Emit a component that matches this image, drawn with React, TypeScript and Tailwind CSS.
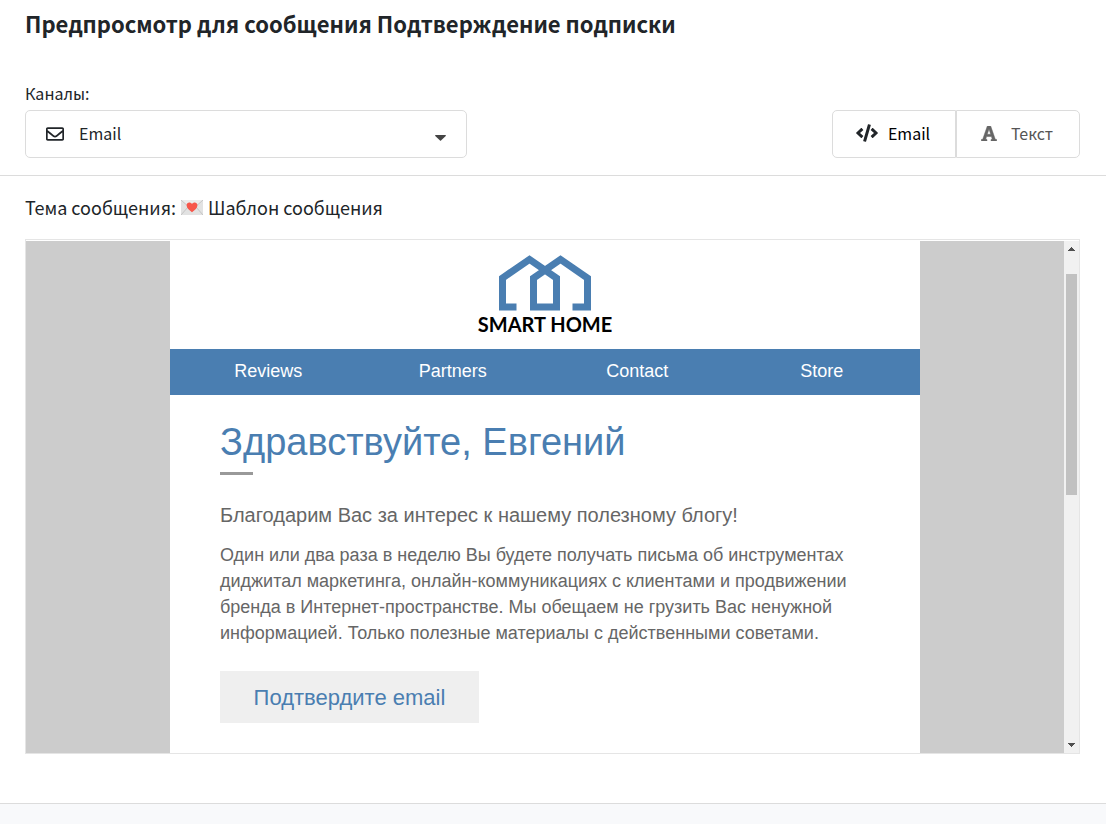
import { useState } from 'react';
import { FaCode, FaRegEnvelope } from 'react-icons/fa';

const MENU = ['Reviews', 'Partners', 'Contact', 'Store'];

function LoveLetter() {
  return (
    <svg viewBox="0 0 22 15" className="inline-block h-[15px] w-[22px]" role="img" aria-label="Письмо">
      <rect width="22" height="15" fill="#e2e2e2" />
      <path d="M0 0H22L11 10Z" fill="#ececec" />
      <path d="M0 0L9 8M22 0L13 8M0 15L7 7M22 15L15 7" stroke="#bdbdbd" strokeWidth="0.8" fill="none" />
      <path
        d="M11 12.2C8 10 5.6 8 5.6 5.2C5.6 2.2 9.4 1.4 11 4C12.6 1.4 16.4 2.2 16.4 5.2C16.4 8 14 10 11 12.2Z"
        fill="#f7574b"
      />
    </svg>
  );
}

function SlabIcon() {
  return (
    <svg viewBox="0 32 448 432" className="mr-3.5 h-[15px] w-4" fill="#666" stroke="#666" strokeWidth="14" aria-hidden="true">
      <path d="M152 416h-24l26.6-80.8H292.8L319.4 416H296c-8.8 0-16 7.2-16 16v16c0 8.8 7.2 16 16 16h136c8.8 0 16-7.2 16-16v-16c0-8.8-7.2-16-16-16h-26.7L275.5 42.7A16 16 0 0 0 260.4 32h-72.8a16 16 0 0 0-15.1 10.7L42.7 416H16c-8.8 0-16 7.2-16 16v16c0 8.8 7.2 16 16 16h136c8.8 0 16-7.2 16-16v-16c0-8.8-7.2-16-16-16zm64.4-271.8c4.3-15.2 6.6-28.1 7.6-34.6.8 6.5 2.9 19.5 7.7 34.7l41.3 124h-98.6z" />
    </svg>
  );
}

function Logo() {
  return (
    <div className="flex flex-col items-center">
      <svg viewBox="0 0 92 56" className="h-14 w-[92px]" fill="none" stroke="#4a7eb1" strokeWidth="7">
        <path d="M17.5 52H3.5V23L30.5 4.4L57.5 23V52H34.5V23L61.5 4.4L88.5 23V52H73.5" />
      </svg>
      <span className="font-['Lato',sans-serif] text-xl leading-[26px] font-bold text-black">SMART HOME</span>
    </div>
  );
}

function ModeButton({ icon, label, active, onClick, shape }: {
  icon: React.ReactNode;
  label: string;
  active: boolean;
  onClick: () => void;
  shape: string;
}) {
  return (
    <button
      type="button"
      aria-pressed={active}
      onClick={onClick}
      className={`flex h-12 w-[124px] cursor-pointer items-center justify-center border border-[#dcdcdc] pr-0.5 pb-0.5 ${shape} ${active ? 'text-black' : 'text-[#555]'}`}
    >
      {icon}
      {label}
    </button>
  );
}

function Scrollbar() {
  return (
    <div className="flex w-[15px] shrink-0 flex-col items-center bg-[#f1f1f1]" aria-hidden="true">
      <div className="flex h-[33px] pt-1.5">
        <svg viewBox="0 0 7 4" className="h-1 w-[7px]" fill="#505050" shapeRendering="crispEdges">
          <path d="M3 0H4V1H5V2H6V3H7V4H0V3H1V2H2V1H3Z" />
        </svg>
      </div>
      <div className="h-[221px] w-[11px] bg-[#c1c1c1]" />
      <div className="flex flex-1 items-end pb-1.5">
        <svg viewBox="0 0 7 4" className="h-1 w-[7px]" fill="#505050" shapeRendering="crispEdges">
          <path d="M0 0H7V1H6V2H5V3H4V4H3V3H2V2H1V1H0Z" />
        </svg>
      </div>
    </div>
  );
}

function EmailBody() {
  return (
    <div className="w-full max-w-[750px] bg-white font-['Liberation_Sans',Arial,sans-serif] text-[#666]">
      <div className="flex h-[108px] justify-center pt-3.5">
        <Logo />
      </div>
      <nav className="grid h-[46px] grid-cols-4 items-center bg-[#4a7eb1] px-1.5 text-lg text-white">
        {MENU.map((item) => (
          <a key={item} href="#" className="pb-0.5 text-center">{item}</a>
        ))}
      </nav>
      <div className="px-[50px] pt-6 pb-[30px]">
        <h2 className="text-[38px] leading-[46px] text-[#4a7eb1]">Здравствуйте, Евгений</h2>
        <div className="mt-[7px] h-[3px] w-[33px] bg-[#999]" />
        <h3 className="mt-6 text-xl leading-8">Благодарим Вас за интерес к нашему полезному блогу!</h3>
        <p className="mt-[11px] text-lg leading-[26px]">
          Один или два раза в неделю Вы будете получать письма об инструментах диджитал маркетинга,
          онлайн-коммуникациях с клиентами и продвижении бренда в Интернет-пространстве. Мы обещаем не грузить
          Вас ненужной информацией. Только полезные материалы с действенными советами.
        </p>
        <a href="#" className="mt-[25px] inline-flex h-[52px] w-[259px] items-center justify-center bg-[#efefef] text-[22px] text-[#4a7eb1]">
          Подтвердите email
        </a>
      </div>
    </div>
  );
}

export default function App() {
  const [mode, setMode] = useState('email');

  return (
    <div className="flex min-h-screen flex-col bg-white font-['Noto_Sans_CJK_SC',sans-serif] text-base text-[#212529]">
      <h1 className="px-[25px] pt-[5px] text-[22px] leading-9 font-bold">
        Предпросмотр для сообщения Подтверждение подписки
      </h1>

      <div className="flex items-end justify-between gap-4 border-b border-[#dcdcdc] pt-10 pr-[26px] pb-[17px] pl-[25px]">
        <div className="flex w-[442px] flex-col">
          <label htmlFor="channel" className="mb-[5px] leading-6">Каналы:</label>
          <div className="grid items-center">
            <select
              id="channel"
              className="col-start-1 row-start-1 h-12 w-full appearance-none rounded-[5px] border border-[#dcdcdc] bg-white pb-0.5 pl-[53px]"
            >
              <option>Email</option>
            </select>
            <FaRegEnvelope className="pointer-events-none col-start-1 row-start-1 ml-[21px] size-[18px]" />
            <svg
              viewBox="0 0 11 6"
              className="pointer-events-none col-start-1 row-start-1 mt-2 mr-[21px] h-1.5 w-[11px] justify-self-end"
              fill="#444"
            >
              <path d="M0.5 0H10.5L11 0.8L6 5.6Q5.5 6 5 5.6L0 0.8Z" />
            </svg>
          </div>
        </div>
        <div className="flex">
          <ModeButton
            icon={<FaCode className="mr-2.5 size-[22px] text-[#212529]" />}
            label="Email"
            active={mode === 'email'}
            onClick={() => setMode('email')}
            shape="rounded-l-[5px]"
          />
          <ModeButton
            icon={<SlabIcon />}
            label="Текст"
            active={mode === 'text'}
            onClick={() => setMode('text')}
            shape="rounded-r-[5px]"
          />
        </div>
      </div>

      <div className="pt-[15px] pr-[26px] pb-[49px] pl-[25px]">
        <p className="flex items-center gap-[5px] text-lg leading-8">
          Тема сообщения: <LoveLetter /> Шаблон сообщения
        </p>
        <div className="mt-4 flex border border-[#e5e5e5] pt-px">
          <div className="flex flex-1 justify-center bg-[#ccc]">
            <EmailBody />
          </div>
          <Scrollbar />
        </div>
      </div>

      <footer className="min-h-5 flex-1 border-t border-[#dcdcdc] bg-[#f8f9fb]" />
    </div>
  );
}
